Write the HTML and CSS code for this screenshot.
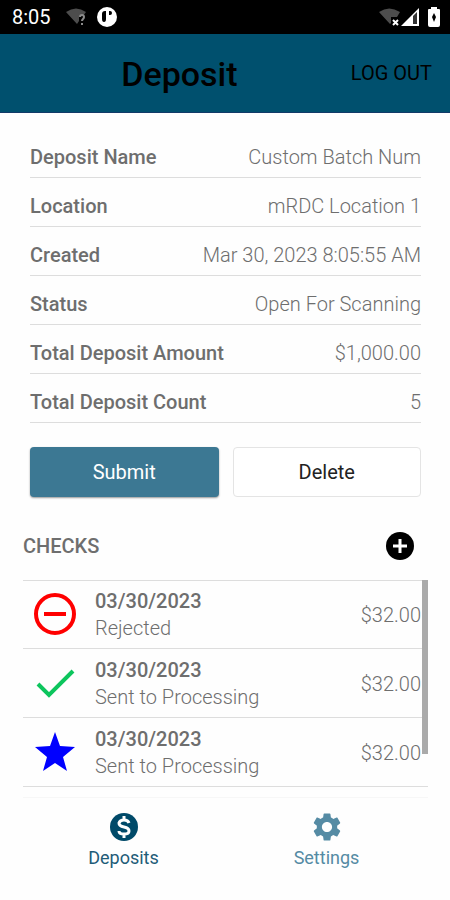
FILE: index.html
```
<!DOCTYPE html>
<html lang="en">
<head>
  <meta charset="UTF-8">
  <meta name="viewport" content="width=device-width, initial-scale=1">
  <title>Deposit</title>
  <link rel="stylesheet" href="styles.css">
</head>
<body>

<!-- Status bar -->
<div class="status_bar">
  <span class="clock">8:05</span>
  <svg class="wifi_unknown" width="22" height="18" viewBox="0 0 22 18">
    <path d="M0 4Q10-3 20 4L17 8h-4v5l-2 3z" fill="#4d4d4d"/>
    <path d="M14 9q0-2 2-2t2 2q0 1-1 2t-1 2M16 15v2" fill="none" stroke="#8a8a8a" stroke-width="2"/>
  </svg>
  <svg width="20" height="20" viewBox="0 0 20 20">
    <circle cx="10" cy="10" r="10" fill="#fff"/>
    <path d="M9 4H8Q5 4 5 7v5q0 3 2 3t2-3z" fill="#000"/>
    <path d="M12 4h1q2 0 2 2t-2 2h-1z" fill="#000"/>
  </svg>
  <span class="spacer"></span>
  <svg width="22" height="18" viewBox="0 0 22 18">
    <path d="M0 4Q10-3 21 4L18 9h-6v6l-1 1z" fill="#4d4d4d"/>
    <path d="M14 12l5 5M19 12l-5 5" stroke="#fff" stroke-width="2"/>
  </svg>
  <svg width="18" height="18" viewBox="0 0 18 18">
    <path d="M0 18L18 0v18z" fill="#fff"/>
    <path d="M12 8l4-4v12h-4z" fill="#333"/>
  </svg>
  <svg class="battery" width="12" height="20" viewBox="0 0 12 20">
    <path d="M3 2V0h6v2h2q1 0 1 1v15q0 2-2 2H2q-2 0-2-2V3q0-1 1-1z" fill="#fff"/>
    <path d="M6 6l2 4-2 5-2-5z" fill="#000"/>
  </svg>
</div>

<header class="app_bar">
  <h1>Deposit</h1>
  <button type="button" class="btn_logout">LOG OUT</button>
</header>

<main>
  <form class="deposit">
    <div class="field"><label for="depositName">Deposit Name</label><input type="text" id="depositName" value="Custom Batch Num"></div>
    <div class="field"><b>Location</b><span>mRDC Location 1</span></div>
    <div class="field"><b>Created</b><span>Mar 30, 2023 8:05:55 AM</span></div>
    <div class="field"><b>Status</b><span>Open For Scanning</span></div>
    <div class="field"><b>Total Deposit Amount</b><span>$1,000.00</span></div>
    <div class="field"><b>Total Deposit Count</b><span>5</span></div>

    <div class="buttons">
      <button type="button" class="btn btn_submit">Submit</button>
      <button type="button" class="btn btn_delete">Delete</button>
    </div>
  </form>

  <section class="checks">
    <div class="checks_head">
      <h2>CHECKS</h2>
      <button type="button" class="btn_add" aria-label="Add check">
        <svg width="28" height="28" viewBox="0 0 28 28">
          <circle cx="14" cy="14" r="14" fill="#000"/>
          <path d="M14 7v14M7 14h14" stroke="#fff" stroke-width="3"/>
        </svg>
      </button>
    </div>

    <div class="list_wrap">
      <ul class="check_list">
        <li>
          <svg width="44" height="44" viewBox="0 0 44 44">
            <circle cx="22" cy="21" r="19" fill="none" stroke="#f00" stroke-width="4"/>
            <path d="M11 21h22" stroke="#f00" stroke-width="4"/>
          </svg>
          <div class="check_info"><b>03/30/2023</b><span>Rejected</span></div>
          <span class="amount">$32.00</span>
        </li>
        <li>
          <svg width="44" height="44" viewBox="0 0 44 44">
            <path d="M5 22l11 11L40 9" fill="none" stroke="#0dc55d" stroke-width="4"/>
          </svg>
          <div class="check_info"><b>03/30/2023</b><span>Sent to Processing</span></div>
          <span class="amount">$32.00</span>
        </li>
        <li>
          <svg width="44" height="44" viewBox="0 0 44 44">
            <path d="M22 1l5 14 15 1-12 10 4 14-12-8-12 8 4-14L2 16l15-1z" fill="#00f"/>
          </svg>
          <div class="check_info"><b>03/30/2023</b><span>Sent to Processing</span></div>
          <span class="amount">$32.00</span>
        </li>
      </ul>
      <div class="scroll_thumb"></div>
    </div>
  </section>
</main>

<nav class="tabs">
  <a href="#" class="active">
    <svg width="28" height="28" viewBox="0 0 28 28">
      <circle cx="14" cy="14" r="14" fill="#004a69"/>
      <path d="M19 10q-1-3-5-3t-5 3q0 3 5 4t5 4q0 3-5 3t-5-3M14 3v4M14 21v4" fill="none" stroke="#fff" stroke-width="3"/>
    </svg>
    Deposits
  </a>
  <a href="#">
    <svg width="34" height="34" viewBox="0 0 24 24">
      <path fill="#558ba4" d="M19.140 12.940c.040-.300.060-.610.060-.940 0-.320-.020-.640-.070-.940l2.030-1.580c.180-.140.230-.410.120-.610l-1.920-3.320c-.120-.220-.370-.290-.590-.220l-2.390.960c-.500-.380-1.030-.700-1.620-.940l-.360-2.540c-.040-.240-.240-.410-.480-.410h-3.840c-.240 0-.430.170-.470.410l-.360 2.540c-.590.240-1.130.570-1.620.940l-2.390-.960c-.220-.080-.470 0-.590.220L2.740 8.870c-.120.210-.080.470.120.610l2.030 1.580c-.050.300-.090.630-.090.940s.020.640.070.940l-2.030 1.580c-.180.140-.230.410-.120.610l1.920 3.320c.120.220.370.290.590.220l2.390-.960c.500.380 1.030.700 1.620.940l.360 2.540c.050.240.240.410.480.410h3.840c.240 0 .440-.170.470-.410l.360-2.540c.590-.240 1.130-.560 1.620-.940l2.390.960c.220.080.470 0 .590-.220l1.920-3.320c.120-.220.070-.470-.120-.610l-2.010-1.580zM12 15.600c-1.980 0-3.600-1.620-3.600-3.600s1.620-3.600 3.600-3.600 3.600 1.620 3.600 3.600-1.620 3.600-3.600 3.600z"/>
    </svg>
    Settings
  </a>
</nav>

</body>
</html>
```
FILE: styles.css
```
* { box-sizing: border-box; }
body { margin: 0; min-height: 100vh; display: flex; flex-direction: column; background: #fefefe; color: #6e6e6e; font-family: Roboto, sans-serif; font-size: 20px; }
button { padding: 0; border: none; background: none; font-family: inherit; cursor: pointer; }
b, label, h2 { font-weight: 500; }
svg { flex: none; display: block; }

.status_bar { display: flex; align-items: center; height: 34px; padding: 0 10px 0 12px; background: #000; color: #fff; }
.status_bar .clock { font-size: 20px; }
.status_bar .wifi_unknown { margin: 0 9px 0 15px; }
.status_bar .spacer { flex: 1; }
.status_bar .battery { margin-left: 9px; }

.app_bar { display: flex; align-items: center; height: 79px; padding: 0 18px 0 8px; background: #00506e; border-bottom: 1px solid #123a68; }
.app_bar h1 { flex: 1; margin: 0; padding-top: 2px; color: #000; font-size: 34px; font-weight: 500; text-align: center; }
.btn_logout { color: #000; font-size: 20px; font-weight: 400; white-space: nowrap; }

main { flex: 1; display: flex; flex-direction: column; }
.deposit { padding: 16px 29px 0 30px; }
.field { display: flex; justify-content: space-between; align-items: center; gap: 12px; height: 49px; padding-top: 8px; border-bottom: 1px solid #ddd; white-space: nowrap; }
.field span, .field input { font-weight: 300; }
.field input { flex: 1; min-width: 0; padding: 0; border: none; background: none; color: inherit; font-family: inherit; font-size: 20px; text-align: right; }

.buttons { display: grid; grid-template-columns: 1fr 1fr; gap: 14px; margin-top: 24px; }
.btn { height: 50px; border-radius: 4px; font-size: 20px; }
.btn_submit { background: #3c7893; color: #fff; box-shadow: 0 1px 2px #999; }
.btn_delete { border: 1px solid #e4e4e4; background: #fff; color: #222; }

.checks { flex: 1; display: flex; flex-direction: column; padding: 0 22px 0 23px; }
.checks_head { display: flex; justify-content: space-between; align-items: center; height: 68px; margin-top: 15px; padding-right: 14px; }
.checks_head h2 { margin: 0; font-size: 20px; }
.list_wrap { position: relative; flex: 1; border-bottom: 1px solid #f7f7f7; }
.check_list { margin: 0; padding: 0; list-style: none; box-shadow: inset 0 1px #ddd; }
.check_list li { display: flex; align-items: center; height: 69px; padding: 2px 7px 0 10px; border-bottom: 1px solid #ddd; }
.check_info { flex: 1; display: flex; flex-direction: column; margin-left: 18px; line-height: 27px; }
.check_info span, .amount { font-weight: 300; }
.scroll_thumb { position: absolute; top: 0; right: 0; width: 6px; height: 174px; background: #aaa; }

.tabs { display: grid; grid-template-columns: 1fr 1fr; height: 102px; padding: 12px 22px 0; }
.tabs a { display: flex; flex-direction: column; align-items: center; color: #558ba4; font-size: 18px; line-height: 28px; text-decoration: none; }
.tabs svg { height: 34px; }
.tabs .active { color: #1f5c78; }
```
